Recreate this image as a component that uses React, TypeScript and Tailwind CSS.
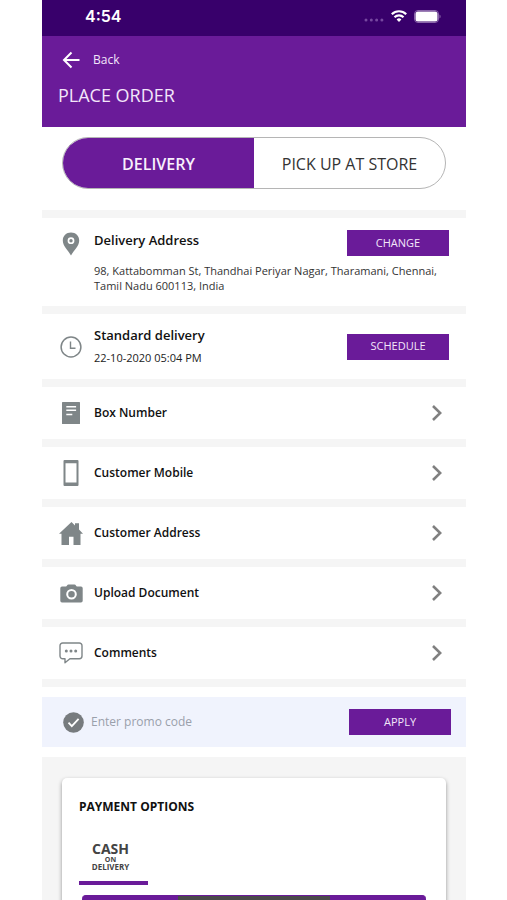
import type { ReactNode } from "react";

function PinIcon() {
  return (
    <svg width="18" height="24" viewBox="0 0 18 24" aria-hidden="true">
      <path fill="#7f8688" fillRule="evenodd" d="M9 0.5C4.2 .5 .8 4 .8 8.500c0 5.500 5 9.500 8.200 15 3.200-5.500 8.200-9.500 8.200-15C17.200 4 13.800 .5 9 .5Zm0 4.800a3.400 3.400 0 1 1 0 6.800 3.400 3.400 0 0 1 0-6.800Z" />
      <circle cx="9" cy="8.700" r="1.700" fill="#7f8688" />
    </svg>
  );
}

function ClockIcon() {
  return (
    <svg width="22" height="22" viewBox="0 0 22 22" fill="none" stroke="#7f8688" aria-hidden="true">
      <circle cx="11" cy="11" r="9.900" strokeWidth="1.500" />
      <path d="M10.500 5.500v6.700h5" strokeWidth="1.400" />
    </svg>
  );
}

function BoxIcon() {
  return (
    <svg width="18" height="22" viewBox="0 0 18 22" aria-hidden="true">
      <rect width="18" height="22" rx="0.500" fill="#7f8688" />
      <path d="M4.300 4.700h9.800M4.300 8.300h9.800M4.300 12.500h6" stroke="#fff" strokeWidth="1.500" />
    </svg>
  );
}

function MobileIcon() {
  return (
    <svg width="16" height="26" viewBox="0 0 16 26" aria-hidden="true">
      <path fill="#7f8688" fillRule="evenodd" d="M1.500 0h13a1 1 0 0 1 1 1v24a1 1 0 0 1-1 1h-13a1 1 0 0 1-1-1V1a1 1 0 0 1 1-1Zm1 3.200v19.400h11V3.200Z" />
    </svg>
  );
}

function HouseIcon() {
  return (
    <svg width="24" height="23" viewBox="0 0 24 23" aria-hidden="true">
      <path fill="#7f8688" d="M12.500 0 16 3.500V1.200h4v6.400l4 4.200h-2.500V23h-7v-8.300h-4.500V23H2.500V11.800H0Z" />
    </svg>
  );
}

function CameraIcon() {
  return (
    <svg width="23" height="19" viewBox="0 0 23 19" aria-hidden="true">
      <path fill="#7f8688" fillRule="evenodd" d="M8.500 .4h6c1.400 0 1.600 2.200 2.600 2.200H21a1.700 1.700 0 0 1 1.700 1.700v12.500a1.700 1.700 0 0 1-1.700 1.700H2a1.700 1.700 0 0 1-1.700-1.700V4.300A1.700 1.700 0 0 1 2 2.600h3.900C6.900 2.600 7.100 .4 8.500 .4ZM11.500 5a5.300 5.300 0 1 0 0 10.600 5.300 5.300 0 0 0 0-10.600Zm0 2a3.300 3.300 0 1 1 0 6.600 3.300 3.300 0 0 1 0-6.600Z" />
    </svg>
  );
}

function CommentIcon() {
  return (
    <svg width="24" height="22" viewBox="0 0 24 22" aria-hidden="true">
      <path fill="none" stroke="#7f8688" strokeWidth="1.400" strokeLinejoin="round" d="M3.700 1h16.600a2.700 2.700 0 0 1 2.700 2.700v10.400a2.700 2.700 0 0 1-2.700 2.700h-9.400L6 20.800v-4H3.700A2.700 2.700 0 0 1 1 14.100V3.700A2.700 2.700 0 0 1 3.700 1Z" />
      <g fill="#7f8688">
        <circle cx="7.300" cy="9" r="1.500" />
        <circle cx="12" cy="9" r="1.500" />
        <circle cx="16.700" cy="9" r="1.500" />
      </g>
    </svg>
  );
}

function IconCell({ children }: { children: ReactNode }) {
  return <span className="flex w-6 shrink-0 justify-center">{children}</span>;
}

function Divider() {
  return <div className="h-2 bg-[#f5f5f5]" />;
}

function ActionButton({ children }: { children: ReactNode }) {
  return (
    <button type="button" className="h-[26px] w-[102px] shrink-0 bg-[#6a1b99] text-[11px] text-[#f3e6fa]">
      {children}
    </button>
  );
}

const rows = [
  { label: "Box Number", icon: <BoxIcon /> },
  { label: "Customer Mobile", icon: <MobileIcon /> },
  { label: "Customer Address", icon: <HouseIcon /> },
  { label: "Upload Document", icon: <CameraIcon /> },
  { label: "Comments", icon: <CommentIcon /> },
];

function StatusBar() {
  return (
    <div className="flex h-9 items-center justify-between bg-[#38006b] pb-1 pr-[25px] pl-[43px] text-white">
      <span className="font-['Inter'] text-base font-semibold">4:54</span>
      <span className="flex items-center gap-[7px]">
        <svg width="20" height="12" viewBox="0 0 20 12" fill="#7748a0" aria-hidden="true">
          <circle cx="2" cy="10" r="1.500" />
          <circle cx="7.300" cy="10" r="1.500" />
          <circle cx="12.600" cy="10" r="1.500" />
          <circle cx="17.900" cy="10" r="1.500" />
        </svg>
        <svg width="16" height="12" viewBox="0 0 16 12" aria-hidden="true">
          <g fill="none" stroke="#fff" strokeWidth="2.200">
            <path d="M.8 4.200a10.300 10.300 0 0 1 14.400 0" />
            <path d="M3.500 7.200a6.400 6.400 0 0 1 9 0" />
          </g>
          <path fill="#fff" d="M8 12 5.600 9.500a3.400 3.400 0 0 1 4.800 0Z" />
        </svg>
        <svg width="27" height="13" viewBox="0 0 27 13" aria-hidden="true">
          <rect x="0.500" y="0.500" width="24" height="12" rx="3.500" fill="none" stroke="#8b66ab" />
          <rect x="1.500" y="1.500" width="22" height="10" rx="2.500" fill="#fff" />
          <path d="M25.500 4.500c1.500.5 1.500 3.500 0 4Z" fill="#8b66ab" />
        </svg>
      </span>
    </div>
  );
}

export default function App() {
  return (
    <div className="h-screen overflow-hidden bg-white pr-[41px] pl-[42px] font-['Open_Sans',sans-serif] text-[#111]">
      <StatusBar />
      <header className="bg-[#6a1b99] px-4 pt-[13px] pb-[18px] text-[#f3e6fa]">
        <button type="button" className="flex h-[22px] items-center gap-[13px] pl-1 text-xs">
          <svg width="18" height="18" viewBox="0 0 18 18" fill="none" stroke="#fff" strokeWidth="2" aria-hidden="true">
            <path d="M17.500 9H2M9.500 1.500 2 9l7.500 7.500" />
          </svg>
          Back
        </button>
        <h1 className="pt-2.5 text-lg leading-7">PLACE ORDER</h1>
      </header>

      <main>
        <div className="px-5 pt-2.5 pb-[21px]">
          <div className="flex h-[52px] overflow-hidden rounded-full border border-[#b5b5b5] text-base">
            <button type="button" aria-pressed="true" className="flex-1 bg-[#6a1b99] pt-0.5 font-semibold text-[#f8effc]">
              DELIVERY
            </button>
            <button type="button" aria-pressed="false" className="flex-1 pt-0.5 text-[#333]">
              PICK UP AT STORE
            </button>
          </div>
        </div>

        <Divider />
        <section className="flex gap-[11px] px-[17px] pt-3 pb-[13px]">
          <div className="pt-0.5">
            <IconCell>
              <PinIcon />
            </IconCell>
          </div>
          <div className="min-w-0 flex-1">
            <div className="flex items-start justify-between">
              <h2 className="text-[13px] leading-5 font-semibold">Delivery Address</h2>
              <ActionButton>CHANGE</ActionButton>
            </div>
            <p className="pt-[7px] text-[11px] leading-[15px] text-[#333]">
              98, Kattabomman St, Thandhai Periyar Nagar, Tharamani, Chennai, Tamil Nadu 600113, India
            </p>
          </div>
        </section>

        <Divider />
        <section className="flex items-center gap-[11px] px-[17px] py-[11px]">
          <IconCell>
            <ClockIcon />
          </IconCell>
          <div className="flex-1">
            <h2 className="text-[13px] leading-5 font-semibold">Standard delivery</h2>
            <p className="pt-[3px] text-[11px] leading-5 text-[#222]">22-10-2020 05:04 PM</p>
          </div>
          <ActionButton>SCHEDULE</ActionButton>
        </section>

        <Divider />
        {rows.map((row) => (
          <div key={row.label}>
            <button type="button" className="flex h-[52px] w-full items-center gap-[11px] pr-6 pl-[17px] text-left">
              <IconCell>{row.icon}</IconCell>
              <span className="flex-1 text-xs font-semibold">{row.label}</span>
              <svg width="10" height="16" viewBox="0 0 10 16" fill="none" stroke="#808080" strokeWidth="2.600" aria-hidden="true">
                <path d="m1 1 7.200 7L1 15" />
              </svg>
            </button>
            <Divider />
          </div>
        ))}

        <form className="my-2.5 flex h-[50px] items-center gap-[7px] bg-[#f0f3fd] pr-[15px] pl-[21px]" onSubmit={(e) => e.preventDefault()}>
          <svg width="21" height="21" viewBox="0 0 21 21" aria-hidden="true">
            <circle cx="10.500" cy="10.500" r="10.300" fill="#777b7e" />
            <path d="m5.500 10.700 3.300 3.500 6.800-7.400" fill="none" stroke="#fff" strokeWidth="1.800" />
          </svg>
          <input
            type="text"
            aria-label="Promo code"
            placeholder="Enter promo code"
            className="min-w-0 flex-1 bg-transparent text-xs outline-none placeholder:text-[#9aa0ab]"
          />
          <ActionButton>APPLY</ActionButton>
        </form>

        <section className="bg-[#f5f5f5] px-5 pt-[21px] pb-5">
          <div className="rounded-[5px] bg-white px-[17px] pt-[19px] pb-5 shadow-[0_2px_4px_rgba(0,0,0,0.4)]">
            <h2 className="text-xs leading-5 font-bold">PAYMENT OPTIONS</h2>
            <button
              type="button"
              className="mt-[25px] flex w-[69px] flex-col items-center border-b-4 border-[#6a1b99] pr-1.5 pb-2.5 font-bold text-[#444]"
            >
              <span className="text-sm leading-[14px]">CASH</span>
              <span className="text-[7px] leading-[7px]">ON</span>
              <span className="text-[8px] leading-[8px]">DELIVERY</span>
            </button>
            <div className="mx-[3px] mt-2.5 h-11 overflow-hidden rounded border-t border-[#6a1b99] bg-[#6a1b99] px-24">
              <div className="h-full bg-[#4a4a4a]" />
            </div>
          </div>
        </section>
      </main>
    </div>
  );
}
